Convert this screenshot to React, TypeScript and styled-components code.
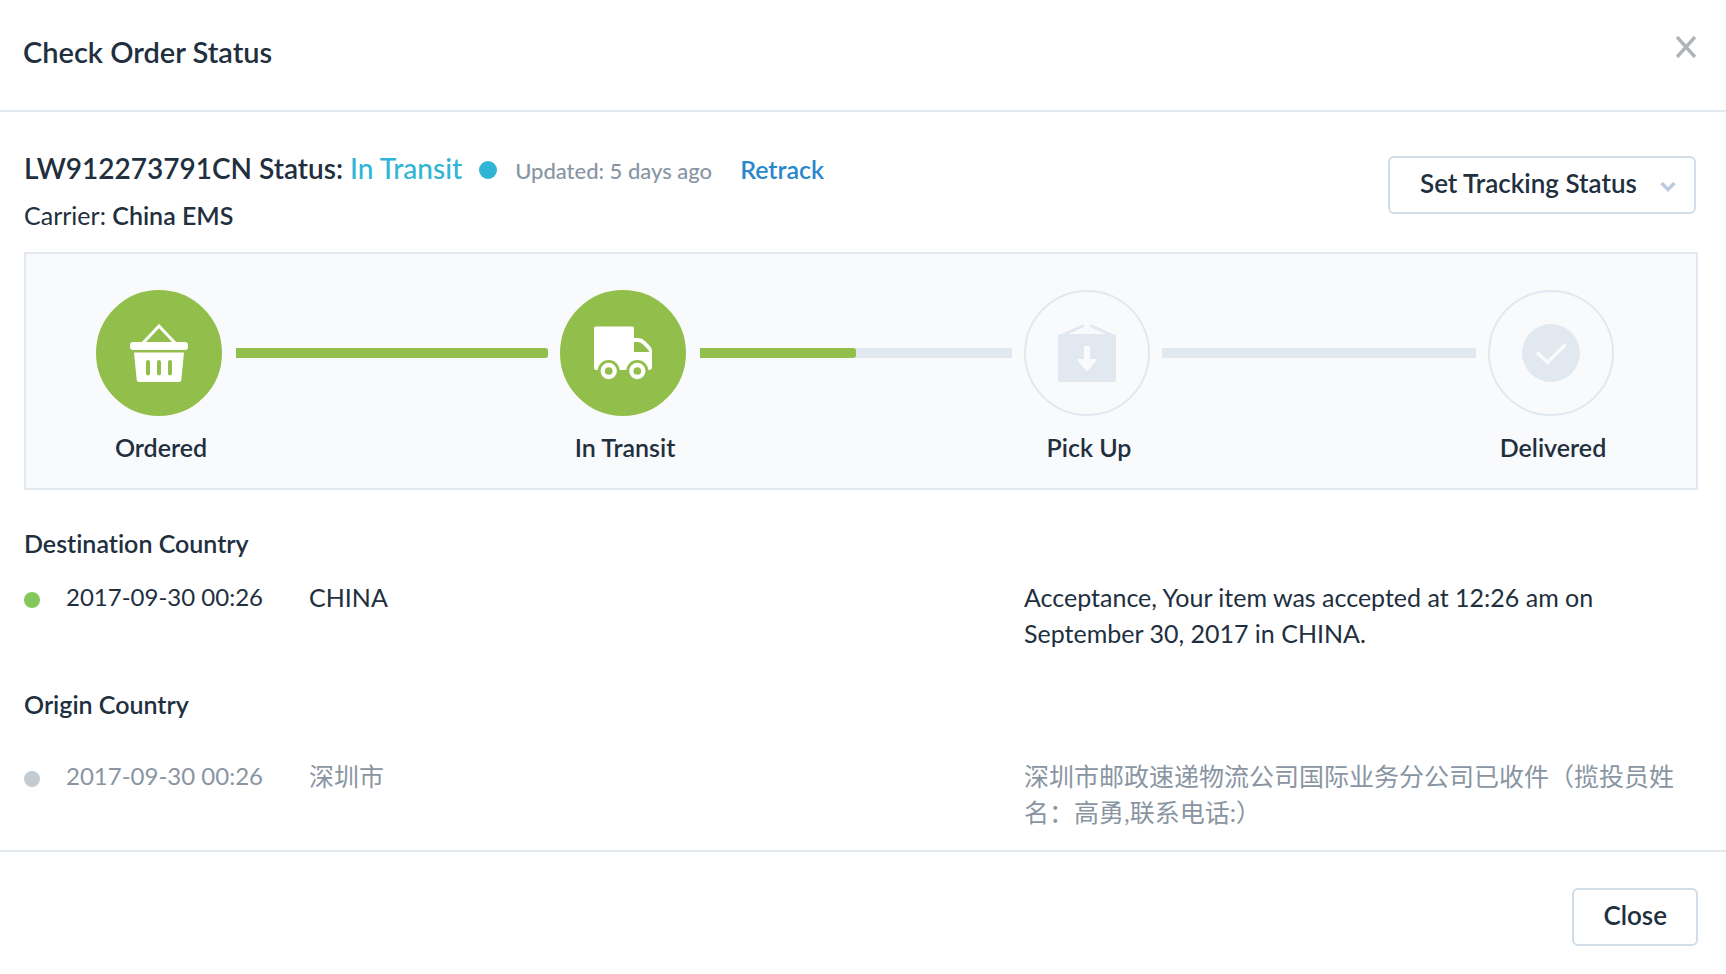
import React from "react";
import styled, { createGlobalStyle } from "styled-components";

const colors = {
  ink: "#212f3e",
  muted: "#8995a2",
  line: "#e1e8f0",
  control: "#d1dde9",
  panel: "#f9fafc",
  green: "#92bf4c",
  cyan: "#30b5d6",
  link: "#2b87cb",
};

const GlobalStyle = createGlobalStyle`
  *, *::before, *::after { box-sizing: border-box; }
  body {
    margin: 0;
    background: #fff;
    color: ${colors.ink};
    font-family: Lato, "Noto Sans CJK SC", sans-serif;
    font-size: 25px;
    line-height: 36px;
    font-variant-ligatures: none;
  }
  h1, h2, h3, p, ol { margin: 0; padding: 0; font-size: inherit; font-weight: inherit; }
  ol { list-style: none; }
  button, select { font: inherit; color: inherit; }
  svg { display: block; }
`;

const Dialog = styled.div`
  width: 100%;
`;

const Header = styled.header`
  display: flex;
  justify-content: space-between;
  align-items: flex-start;
  padding: 34px 30px 40px 23px;
  border-bottom: 2px solid ${colors.line};
`;

const Title = styled.h1`
  && {
    font-size: 29px;
    font-weight: 600;
  }
`;

const IconButton = styled.button`
  margin: 2px 0 0;
  padding: 0;
  border: 0;
  background: none;
  color: #afb4b8;
  cursor: pointer;
`;

const Body = styled.main`
  padding: 38px 28px 20px 24px;
`;

const Summary = styled.section`
  display: flex;
  justify-content: space-between;
  align-items: flex-start;
  margin-bottom: 18px;
`;

const StatusLine = styled.div`
  display: flex;
  align-items: baseline;
  height: 48px;
  line-height: 36px;
`;

const TrackingHeading = styled.h2`
  && {
    font-size: 28px;
    font-weight: 600;
  }
`;

const StatusValue = styled.span`
  color: ${colors.cyan};
  font-weight: 500;
`;

const Dot = styled.span<{ $size: number; $color: string }>`
  display: block;
  flex: none;
  width: ${(p) => p.$size}px;
  height: ${(p) => p.$size}px;
  border-radius: 50%;
  background: ${(p) => p.$color};
`;

const StatusDot = styled(Dot)`
  margin: 0 18px 0 17px;
`;

const Updated = styled.span`
  color: ${colors.muted};
  font-size: 22px;
  font-weight: 500;
`;

const Retrack = styled.a`
  margin-left: 28px;
  color: ${colors.link};
  font-size: 25px;
  font-weight: 600;
  text-decoration: none;
`;

const Carrier = styled.p`
  && {
    font-size: 25px;
    line-height: 34px;
    margin-bottom: 2px;
  }
`;

const Strong = styled.strong`
  font-weight: 600;
`;

const SelectWrap = styled.label`
  position: relative;
  margin: 6px 2px 0 0;
`;

const Select = styled.select`
  display: block;
  width: 308px;
  height: 58px;
  padding: 0 50px 4px 30px;
  border: 2px solid ${colors.control};
  border-radius: 6px;
  background: #fff;
  font-size: 26px;
  font-weight: 600;
  appearance: none;
  cursor: pointer;
`;

const Chevron = styled.svg`
  position: absolute;
  top: 25px;
  right: 20px;
  pointer-events: none;
`;

const Progress = styled.ol`
  display: flex;
  height: 238px;
  padding: 36px 82px 0 70px;
  border: 2px solid ${colors.line};
  background: ${colors.panel};
`;

const StepItem = styled.li<{ $grow: boolean }>`
  display: flex;
  flex: ${(p) => (p.$grow ? "1" : "none")};
`;

const Step = styled.div`
  display: flex;
  flex: none;
  flex-direction: column;
  align-items: center;
  gap: 13px;
  width: 126px;
`;

const StepCircle = styled.div<{ $done: boolean }>`
  display: grid;
  place-items: center;
  width: 126px;
  height: 126px;
  border: 2px solid ${(p) => (p.$done ? colors.green : colors.line)};
  border-radius: 50%;
  background: ${(p) => (p.$done ? colors.green : "transparent")};
  color: ${(p) => (p.$done ? "#fff" : colors.line)};
`;

const StepLabel = styled.span`
  padding-left: 4px;
  font-size: 25px;
  font-weight: 600;
  white-space: nowrap;
`;

const Track = styled.div<{ $started: boolean }>`
  flex: 1;
  height: 10px;
  margin: 58px 12px 0 ${(p) => (p.$started ? 14 : 12)}px;
  background: ${colors.line};
`;

const TrackFill = styled.div`
  height: 100%;
  border-radius: 0 3px 3px 0;
  background: ${colors.green};
`;

const Group = styled.section<{ $gap: number }>`
  display: grid;
  gap: ${(p) => p.$gap}px;
  margin-top: 35px;
`;

const GroupTitle = styled.h3`
  && {
    font-size: 25px;
    font-weight: 600;
  }
`;

const Event = styled.li<{ $muted: boolean }>`
  display: grid;
  grid-template-columns: 42px 243px 715fr 674fr;
  color: ${(p) => (p.$muted ? colors.muted : colors.ink)};
`;

const EventTime = styled.time`
  font-size: 24px;
`;

const EventDot = styled(Dot)`
  margin-top: 13px;
`;

const Footer = styled.footer`
  display: flex;
  justify-content: flex-end;
  padding: 36px 28px 28px;
  border-top: 2px solid ${colors.line};
`;

const CloseButton = styled.button`
  height: 58px;
  padding: 0 29px 4px;
  border: 2px solid ${colors.control};
  border-radius: 6px;
  background: #fff;
  font-size: 26px;
  font-weight: 600;
  cursor: pointer;
`;

const BasketIcon = () => (
  <svg width="58" height="58" viewBox="0 0 58 58" fill="currentColor" aria-hidden="true">
    <path d="M12.500 19.500 29 2l16.500 17.500" fill="none" stroke="currentColor" strokeWidth="3" />
    <rect y="18" width="58" height="8" rx="3" />
    <path
      fillRule="evenodd"
      d="M4 28.500h50L51.300 56q-.2 2-2.300 2H9q-2.100 0-2.300-2zM16 38v11.500a2 2 0 0 0 4 0V38a2 2 0 0 0-4 0zm11 0v11.500a2 2 0 0 0 4 0V38a2 2 0 0 0-4 0zm11 0v11.500a2 2 0 0 0 4 0V38a2 2 0 0 0-4 0z"
    />
  </svg>
);

const TruckIcon = () => (
  <svg width="58" height="58" viewBox="0 0 58 58" fill="currentColor" aria-hidden="true">
    <path
      fillRule="evenodd"
      d="M2 2.500h36q2 0 2 2V14h4q4 0 7 3l5 5q2 2 2 6v15q0 3-3 3H2q-2 0-2-2V4.500q0-2 2-2zM40 18v10h15.500q-1-2-3-4l-4-4q-2-2-5-2z"
    />
    <g fill={colors.green}>
      <circle cx="14.700" cy="47" r="11" />
      <circle cx="43.300" cy="47" r="11" />
    </g>
    <g fill="none" stroke="currentColor" strokeWidth="4.300">
      <circle cx="14.700" cy="47" r="6" />
      <circle cx="43.300" cy="47" r="6" />
    </g>
  </svg>
);

const ParcelIcon = () => (
  <svg width="58" height="58" viewBox="0 0 58 58" fill="currentColor" aria-hidden="true">
    <path d="M2 12 26 1.500M56 12 32 1.500" fill="none" stroke="currentColor" strokeWidth="3" />
    <rect y="10" width="58" height="48" rx="2" />
    <path d="M26 22h6v13h6q.5 2-1 3.500l-8 9-8-9q-1.500-1.500-1-3.500h6z" fill={colors.panel} />
  </svg>
);

const CheckIcon = () => (
  <svg width="58" height="58" viewBox="0 0 58 58" fill="none" aria-hidden="true">
    <circle cx="29" cy="29" r="29" fill="currentColor" />
    <path d="M15 28.500 25.500 38.500 43.500 20.500" stroke={colors.panel} strokeWidth="3.500" />
  </svg>
);

const steps = [
  { label: "Ordered", Icon: BasketIcon, done: true, progress: 100 },
  { label: "In Transit", Icon: TruckIcon, done: true, progress: 50 },
  { label: "Pick Up", Icon: ParcelIcon, done: false, progress: 0 },
  { label: "Delivered", Icon: CheckIcon, done: false, progress: null },
];

const groups = [
  {
    title: "Destination Country",
    gap: 18,
    muted: false,
    dot: "#84c75b",
    time: "2017-09-30 00:26",
    place: "CHINA",
    detail: "Acceptance, Your item was accepted at 12:26 am on September 30, 2017 in CHINA.",
  },
  {
    title: "Origin Country",
    gap: 36,
    muted: true,
    dot: "#c3cbd3",
    time: "2017-09-30 00:26",
    place: "深圳市",
    detail: "深圳市邮政速递物流公司国际业务分公司已收件（揽投员姓名：高勇,联系电话:）",
  },
];

export default function App() {
  return (
    <Dialog role="dialog" aria-labelledby="dialog-title">
      <GlobalStyle />
      <Header>
        <Title id="dialog-title">Check Order Status</Title>
        <IconButton type="button" aria-label="Dismiss">
          <svg width="20" height="22" viewBox="0 0 20 22" fill="none" stroke="currentColor" strokeWidth="3.500">
            <path d="M1 1 19 21M19 1 1 21" />
          </svg>
        </IconButton>
      </Header>

      <Body>
        <Summary>
          <div>
            <StatusLine>
              <TrackingHeading>
                LW912273791CN Status: <StatusValue>In Transit</StatusValue>
              </TrackingHeading>
              <StatusDot $size={18} $color={colors.cyan} />
              <Updated>Updated: 5 days ago</Updated>
              <Retrack href="#retrack">Retrack</Retrack>
            </StatusLine>
            <Carrier>
              Carrier: <Strong>China EMS</Strong>
            </Carrier>
          </div>
          <SelectWrap>
            <Select aria-label="Set Tracking Status" defaultValue="">
              <option value="">Set Tracking Status</option>
              {steps.map((s) => (
                <option key={s.label}>{s.label}</option>
              ))}
            </Select>
            <Chevron width="16" height="12" viewBox="0 0 16 12" fill="none" stroke="#bccde0" strokeWidth="3.500">
              <path d="M1.500 2 8 8.500 14.500 2" />
            </Chevron>
          </SelectWrap>
        </Summary>

        <Progress>
          {steps.map(({ label, Icon, done, progress }) => (
            <StepItem key={label} $grow={progress !== null}>
              <Step>
                <StepCircle $done={done}>
                  <Icon />
                </StepCircle>
                <StepLabel>{label}</StepLabel>
              </Step>
              {progress !== null && (
                <Track $started={done}>
                  <TrackFill style={{ width: `${progress}%` }} />
                </Track>
              )}
            </StepItem>
          ))}
        </Progress>

        {groups.map((g) => (
          <Group key={g.title} $gap={g.gap}>
            <GroupTitle>{g.title}</GroupTitle>
            <ol>
              <Event $muted={g.muted}>
                <EventDot $size={16} $color={g.dot} />
                <EventTime>{g.time}</EventTime>
                <span>{g.place}</span>
                <p>{g.detail}</p>
              </Event>
            </ol>
          </Group>
        ))}
      </Body>

      <Footer>
        <CloseButton type="button">Close</CloseButton>
      </Footer>
    </Dialog>
  );
}
